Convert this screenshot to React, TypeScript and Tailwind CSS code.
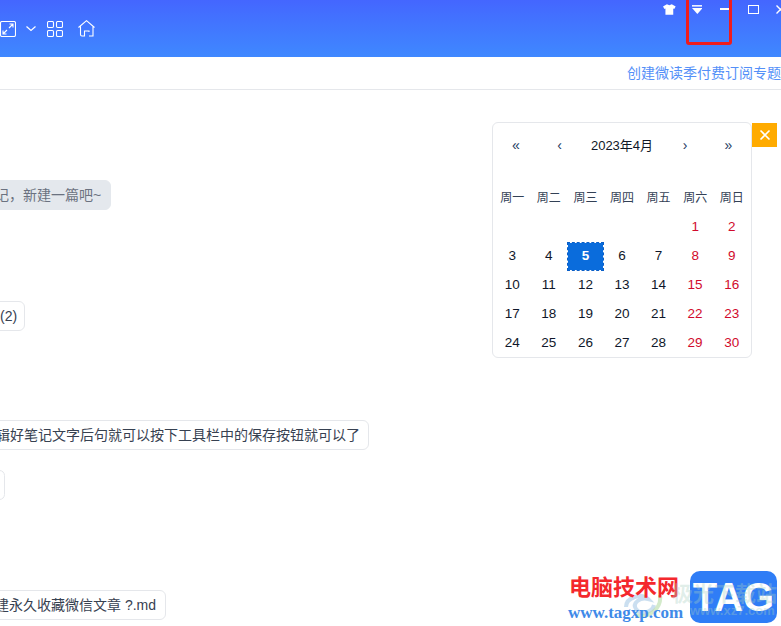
const font = "[font-family:'Liberation_Sans','Noto_Sans_CJK_SC',sans-serif]"

const weekdays = ['周一', '周二', '周三', '周四', '周五', '周六', '周日']
const days: (number | null)[] = [null, null, null, null, null, 1, 2]
for (let d = 3; d <= 30; d++) days.push(d)

function Calendar() {
  return (
    <div className="w-[260px] h-[236px] rounded-md border border-[#e5e7eb] bg-white px-[1px] text-[13.5px]">
      <div className="flex h-[44px] items-center pt-[1px] text-[14px] text-[#1e3a5f]">
        <span className="w-[44px] text-center">«</span>
        <span className="w-[43px] text-center">‹</span>
        <span className="w-[82px] text-center text-[13px] text-[#111827]">2023年4月</span>
        <span className="w-[44px] text-center">›</span>
        <span className="w-[43px] text-center">»</span>
      </div>
      <div className="mt-4 grid grid-cols-7">
        {weekdays.map((w) => (
          <div key={w} className="flex h-[30px] items-center justify-center pb-[1px] text-[12px] text-[#334155]">
            {w}
          </div>
        ))}
        {days.map((d, i) => {
          if (!d) return <div key={i} className="h-[29px]" />
          if (d === 5) {
            return (
              <div key={i} className="flex h-[29px] items-center justify-center border border-dashed border-[#0a5fc8] bg-[#0a6cdc] bg-clip-padding font-bold text-white">
                5
              </div>
            )
          }
          return (
            <div key={i} className={i % 7 >= 5 ? 'flex h-[29px] items-center justify-center text-[#d10a2c]' : 'flex h-[29px] items-center justify-center text-[#0f172a]'}>
              {d}
            </div>
          )
        })}
      </div>
    </div>
  )
}

function Toolbar() {
  return (
    <div className="flex items-center text-white">
      <svg width="16" height="16" viewBox="0 0 16 16" fill="none" stroke="currentColor" strokeWidth="1.1">
        <rect x="0.5" y="0.5" width="15" height="15" rx="1.5" />
        <path d="M9 7 L13 3 M9.5 3 H13 V6.5 M7 9 L3 13 M3 9.5 V13 H6.5" />
      </svg>
      <svg className="ml-[10px]" width="10" height="6" viewBox="0 0 10 6" fill="none" stroke="currentColor" strokeWidth="1.2">
        <path d="M0.5 0.5 L5 4.5 L9.5 0.5" />
      </svg>
      <svg className="ml-[11px]" width="16" height="16" viewBox="0 0 16 16" fill="none" stroke="currentColor" strokeWidth="1.1">
        <rect x="0.5" y="0.5" width="6" height="6" rx="1.2" />
        <rect x="9.5" y="0.5" width="6" height="6" rx="1.2" />
        <rect x="0.5" y="9.5" width="6" height="6" rx="1.2" />
        <rect x="9.5" y="9.5" width="6" height="6" rx="1.2" />
      </svg>
      <svg className="ml-[15px]" width="17" height="17" viewBox="0 0 17 17" fill="none" stroke="currentColor" strokeWidth="1.1">
        <path d="M0.5 7.5 L8.5 0.7 L16.5 7.5 M2.5 6.5 V14.5 Q2.5 16 4 16 H6.5 V11 H11 V12 M15 6.5 V16 H11" />
      </svg>
    </div>
  )
}

function WindowButtons() {
  return (
    <div className="-mr-[4px] flex h-[18px] w-[122px] items-center text-white">
      <svg width="13" height="11" viewBox="0 0 13 11" fill="currentColor">
        <path d="M4 0 L6.5 1.2 L9 0 L13 2.5 L11.5 5 L10.5 4.5 V11 H2.5 V4.5 L1.5 5 L0 2.5 Z" />
      </svg>
      <svg className="ml-[16px]" width="11" height="9" viewBox="0 0 11 9" fill="currentColor">
        <rect x="0" y="0" width="11" height="1.5" />
        <path d="M0 3 H11 L5.5 9 Z" />
      </svg>
      <span className="ml-[18px] h-[2px] w-[9px] bg-white" />
      <span className="ml-[19px] h-[9px] w-[11px] border border-white" />
      <svg className="ml-[17px] shrink-0" width="9" height="9" viewBox="0 0 9 9" fill="none" stroke="currentColor" strokeWidth="1.4">
        <path d="M0.5 0.5 L8.5 8.5 M8.5 0.5 L0.5 8.5" />
      </svg>
    </div>
  )
}

function Watermark() {
  return (
    <div className="absolute left-[560px] top-[565px] h-[61px] w-[221px]">
      <svg className="absolute left-[62px] top-[26px]" width="42" height="28" viewBox="0 0 42 28" fill="none" strokeWidth="4">
        <path d="M4 16 C4 6 20 2 26 8 C18 6 10 12 14 18 C18 24 30 22 32 14" stroke="#a9c9e6" strokeOpacity="0.6" />
        <path d="M14 24 C26 28 40 18 38 4" stroke="#b5dca6" strokeOpacity="0.6" />
      </svg>
      <div className="absolute left-[9px] top-[10px] text-[22px] font-bold leading-[26px] text-[#f4282d]">电脑技术网</div>
      <div className="absolute left-[8px] top-[38px] font-['Liberation_Serif',serif] text-[17px] font-bold leading-[20px] text-[#3f8ae8]">www.tagxp.com</div>
      <div className="absolute left-[130px] top-[6px] flex h-[52px] w-[87px] items-center justify-center rounded-[10px] bg-[#2f7df6] text-[40px] font-bold leading-none text-white">
        TAG
      </div>
      <div className="absolute left-[112px] top-[18px] text-[21px] font-bold leading-none text-[#a8cfc0]/35">极光下载站</div>
      <div className="absolute left-[130px] top-[39px] text-[13px] font-bold leading-none text-[#a8cfc0]/35">www.xz7.com</div>
    </div>
  )
}

export default function App() {
  return (
    <div className={`${font} relative h-[626px] w-[781px] overflow-hidden bg-white`}>
      <header className="flex h-[57px] justify-between bg-gradient-to-b from-[#4466ff] to-[#3f88ff]">
        <div className="flex items-center">
          <Toolbar />
        </div>
        <WindowButtons />
      </header>

      <div className="flex h-[33px] items-center justify-end border-b border-[#e5e7eb] text-[14px] text-[#5490f8]">
        创建微读季付费订阅专题
      </div>

      <main className="flex justify-between">
        <div className="flex flex-col items-start text-[14px] leading-[28px] text-[#374151]">
          <div className="mt-[90px] -ml-[16px] h-[30px] rounded-md border border-[#e4e8ed] bg-[#e4e8ed] pl-[10px] pr-[9px] text-[#6b7280] whitespace-nowrap">
            记，新建一篇吧~
          </div>
          <div className="mt-[91px] -ml-[11px] h-[30px] rounded-md border border-[#e5e7eb] pl-[10px] pr-[7px] whitespace-nowrap">
            (2)
          </div>
          <div className="mt-[89px] -ml-[15px] h-[30px] rounded-md border border-[#e5e7eb] pl-[10px] pr-[8px] whitespace-nowrap">
            辑好笔记文字后句就可以按下工具栏中的保存按钮就可以了
          </div>
          <div className="mt-[20px] -ml-[6px] h-[30px] w-[11px] rounded-md border border-[#e5e7eb]" />
          <div className="mt-[90px] -ml-[16px] h-[30px] rounded-md border border-[#e5e7eb] pl-[10px] pr-[9px] whitespace-nowrap">
            建永久收藏微信文章 ?.md
          </div>
        </div>

        <div className="mr-[4px] mt-[32px] flex items-start">
          <Calendar />
          <button className="mt-[1px] flex h-[24px] w-[25px] items-center justify-center bg-[#ffab00] text-white">
            <svg width="12" height="12" viewBox="0 0 12 12" fill="none" stroke="currentColor" strokeWidth="1.6">
              <path d="M1.5 1.5 L10.5 10.5 M10.5 1.5 L1.5 10.5" />
            </svg>
          </button>
        </div>
      </main>

      {/* red annotation drawn over the screenshot */}
      <div className="absolute left-[686px] top-[-4px] h-[49px] w-[46px] rounded-[3px] border-[3px] border-[#f01c1c]" />
      <Watermark />
    </div>
  )
}
